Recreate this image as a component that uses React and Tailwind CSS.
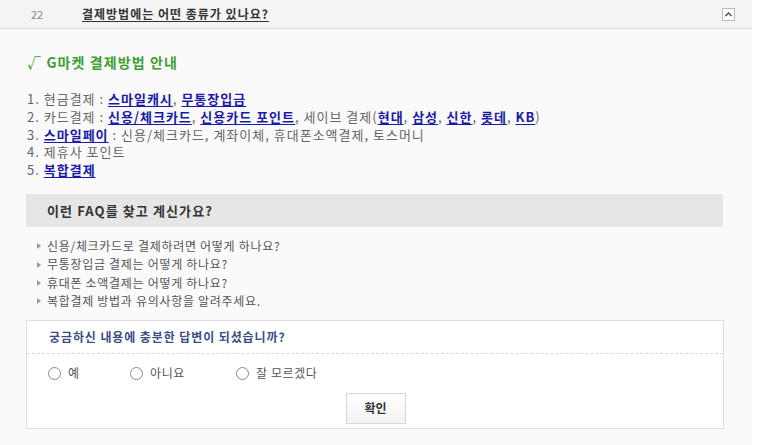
import React from "react";

const font = { fontFamily: '"Noto Sans CJK KR", "Noto Sans", sans-serif' };

function L({ children }) {
  return <a className="text-[#1a1aa8] font-bold underline underline-offset-2">{children}</a>;
}

function Radio({ label, className }) {
  return (
    <label className={"flex items-center gap-[7px] " + className}>
      <span className="w-[13px] h-[13px] rounded-full border border-[#8a8a8a] bg-white inline-block" />
      <span className="text-[12px] text-[#555] tracking-[0.6px]">{label}</span>
    </label>
  );
}

export default function App() {
  const faqs = [
    "신용/체크카드로 결제하려면 어떻게 하나요?",
    "무통장입금 결제는 어떻게 하나요?",
    "휴대폰 소액결제는 어떻게 하나요?",
    "복합결제 방법과 유의사항을 알려주세요.",
  ];
  return (
    <div className="w-[759px] h-[445px] bg-white overflow-hidden" style={font}>
      <div className="w-[752px] h-[445px] bg-[#fafafa] flex flex-col">
        <div className="h-[29px] bg-[#f4f4f4] border-b border-[#dcdcdc] flex items-center shrink-0">
          <span className="w-[82px] pl-[31px] text-[11px] text-[#888]">22</span>
          <span className="text-[12px] font-bold text-[#333] underline underline-offset-2 tracking-[1px]">결제방법에는 어떤 종류가 있나요?</span>
          <span className="ml-auto mr-[17px] w-[13px] h-[13px] border border-[#bbb] bg-white flex items-center justify-center">
            <svg width="7" height="5" viewBox="0 0 7 5"><path d="M0.5 4 L3.5 1 L6.5 4" stroke="#444" strokeWidth="1.3" fill="none" /></svg>
          </span>
        </div>

        <div className="px-[26px]">
          <div className="mt-[23px] text-[14px] font-bold text-[#3f9e36] leading-[20px] pl-[1px] tracking-[1.1px]">√ G마켓 결제방법 안내</div>

          <div className="mt-[18px] text-[13px] text-[#666] leading-[17.8px] pl-[1px] tracking-[1px]">
            <div>1. 현금결제 : <L>스마일캐시</L>, <L>무통장입금</L></div>
            <div>2. 카드결제 : <L>신용/체크카드</L>, <L>신용카드 포인트</L>, 세이브 결제(<L>현대</L>, <L>삼성</L>, <L>신한</L>, <L>롯데</L>, <L>KB</L>)</div>
            <div>3. <L>스마일페이</L> : 신용/체크카드, 계좌이체, 휴대폰소액결제, 토스머니</div>
            <div>4. 제휴사 포인트</div>
            <div>5. <L>복합결제</L></div>
          </div>

          <div className="mt-[15px] h-[33px] bg-[#e6e6e6] flex items-center pl-[21px] w-[697px]">
            <span className="text-[13px] font-bold text-[#333] tracking-[1.1px]">이런 FAQ를 찾고 계신가요?</span>
          </div>

          <ul className="mt-[10px] pl-[11px] text-[12px] text-[#555] leading-[18.4px] tracking-[0.7px]">
            {faqs.map((f) => (
              <li key={f} className="flex items-center">
                <svg width="4" height="6" viewBox="0 0 4 6" className="mr-[6px]"><path d="M0 0 L4 3 L0 6 Z" fill="#999" /></svg>
                {f}
              </li>
            ))}
          </ul>

          <div className="mt-[9px] w-[698px] h-[109px] bg-white border border-[#dedede] flex flex-col">
            <div className="h-[33px] flex items-center pl-[22px] border-b border-dashed border-[#d8d8d8]">
              <span className="text-[12px] font-bold text-[#3d4d84] tracking-[0.9px]">궁금하신 내용에 충분한 답변이 되셨습니까?</span>
            </div>
            <div className="flex items-center h-[39px] pl-[21px]">
              <Radio label="예" className="w-[82px]" />
              <Radio label="아니요" className="w-[106px]" />
              <Radio label="잘 모르겠다" />
            </div>
            <div className="flex justify-center">
              <button className="ml-[1px] w-[60px] h-[31px] border border-[#d6d6d6] bg-gradient-to-b from-white to-[#f3f3f3] text-[12px] font-bold text-[#333]">확인</button>
            </div>
          </div>
        </div>
      </div>
    </div>
  );
}
